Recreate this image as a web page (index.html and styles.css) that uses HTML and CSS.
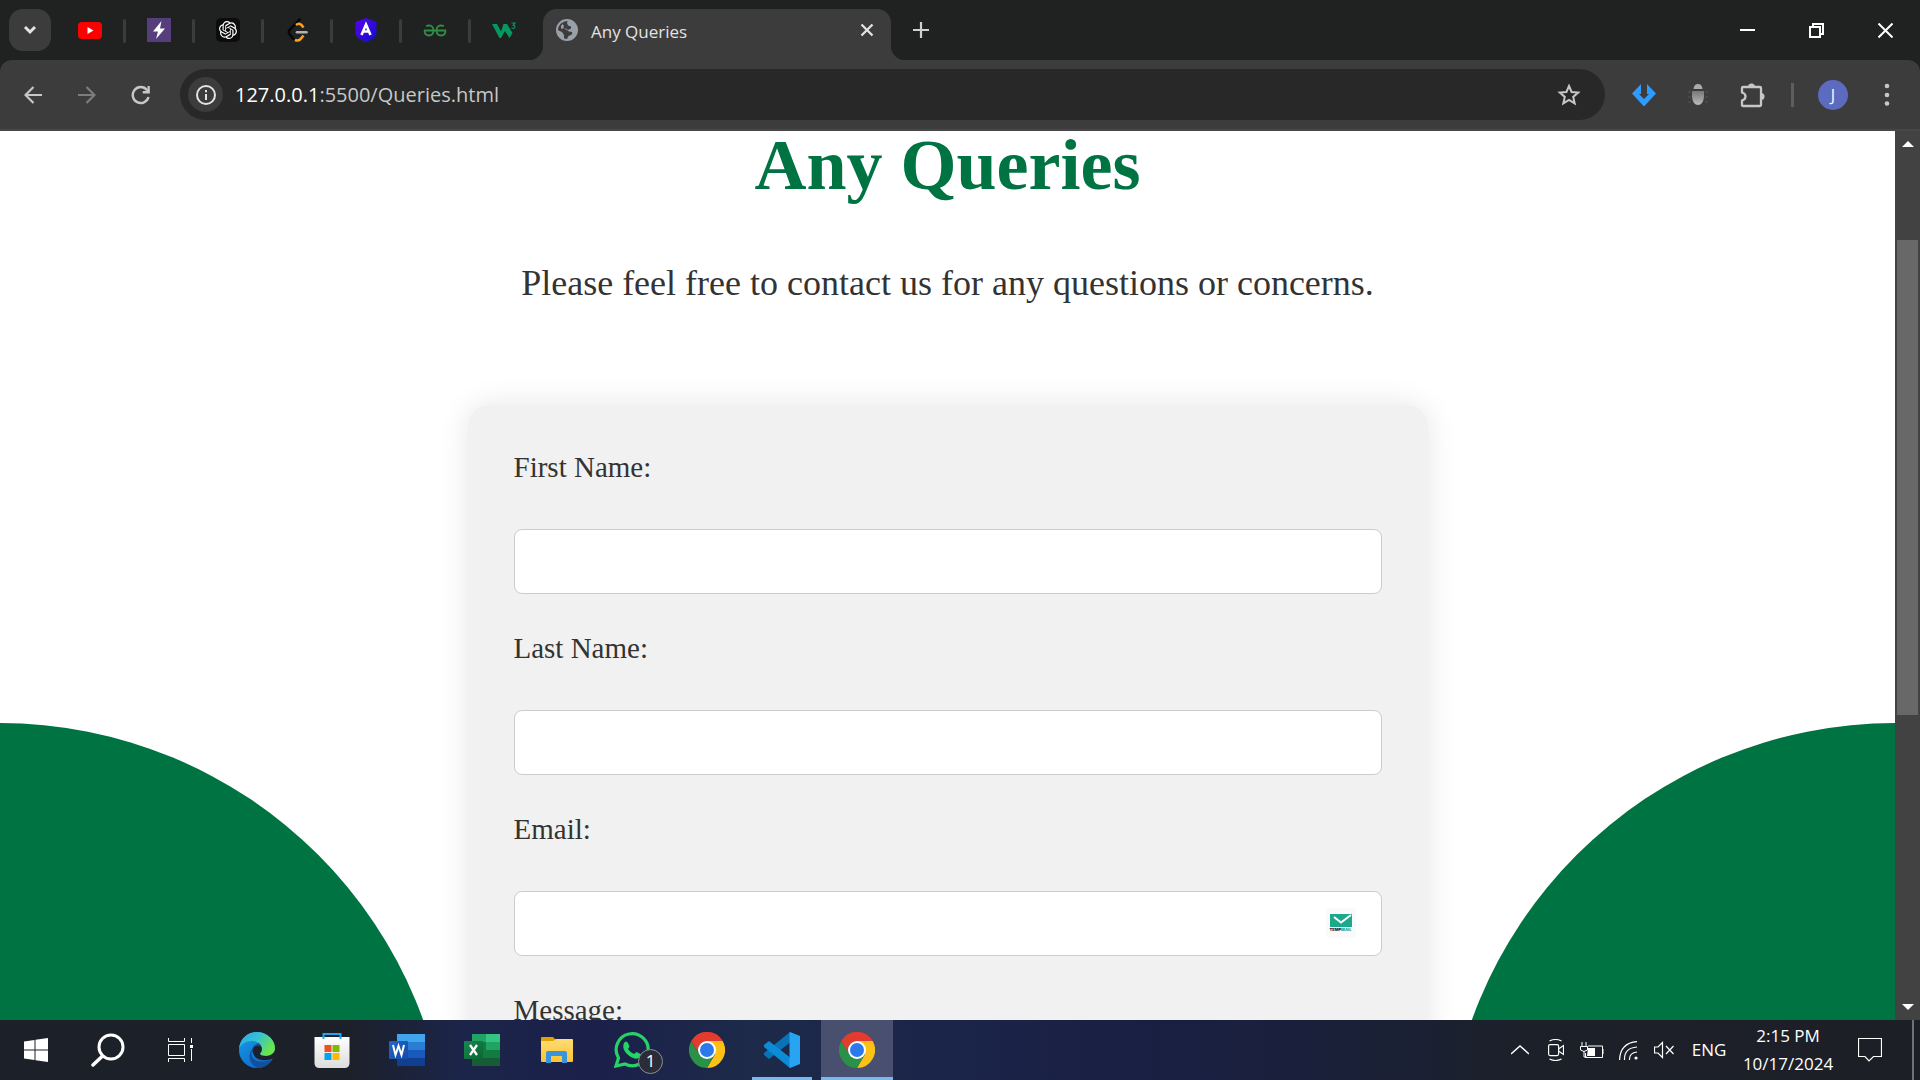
FILE: index.html
```html
<!DOCTYPE html>
<html lang="en">
<head>
<meta charset="utf-8">
<title>Any Queries</title>
<link rel="stylesheet" href="styles.css">
</head>
<body>
<svg class="defs" aria-hidden="true">
  <defs>
    <linearGradient id="word-front" x1="0" y1="0" x2="1" y2="1"><stop offset="0" stop-color="#2368c4"/><stop offset="1" stop-color="#1549a8"/></linearGradient>
    <linearGradient id="excel-front" x1="0" y1="0" x2="1" y2="1"><stop offset="0" stop-color="#18884f"/><stop offset="1" stop-color="#0b6631"/></linearGradient>
    <linearGradient id="edge-top" x1="0" y1="0" x2="1" y2="0.5"><stop offset="0" stop-color="#2aa7e6"/><stop offset="0.5" stop-color="#35c1d6"/><stop offset="1" stop-color="#6be64a"/></linearGradient>
    <linearGradient id="edge-body" x1="0" y1="0" x2="0.6" y2="1"><stop offset="0" stop-color="#1b9de2"/><stop offset="1" stop-color="#0a6cd0"/></linearGradient>
    <linearGradient id="folder" x1="0" y1="0" x2="0" y2="1"><stop offset="0" stop-color="#ffdc78"/><stop offset="1" stop-color="#fbc42f"/></linearGradient>
    <linearGradient id="bag" x1="0" y1="0" x2="0" y2="1"><stop offset="0" stop-color="#ffffff"/><stop offset="1" stop-color="#dcdcdc"/></linearGradient>
    <linearGradient id="bug" x1="0" y1="0" x2="0" y2="1"><stop offset="0" stop-color="#777"/><stop offset="1" stop-color="#bbb"/></linearGradient>
    <linearGradient id="shield" x1="0" y1="0" x2="1" y2="1"><stop offset="0" stop-color="#5a00f0"/><stop offset="1" stop-color="#0d12c8"/></linearGradient>
    <symbol id="chrome" viewBox="0 0 36 36">
      <path d="M18 18 2.4 9A18 18 0 0 1 33.600 9z" fill="#e33b2e"/>
      <path d="M18 9h15.600A18 18 0 0 1 18 36l7.800-13.500z" fill="#fbc116"/>
      <path d="M10.200 22.500 2.400 9A18 18 0 0 0 18 36l7.800-13.500z" fill="#2a9246"/>
      <path d="M2.400 9A18 18 0 0 1 33.600 9H18a9 9 0 0 0-7.800 13.500z" fill="#e33b2e"/>
      <circle cx="18" cy="18" r="9" fill="#fff"/><circle cx="18" cy="18" r="7" fill="#2b79ea"/>
    </symbol>
  </defs>
</svg>

<header class="browser">
  <div class="tab-strip">
    <button class="tab-search" aria-label="Search tabs"><svg width="14" height="10" viewBox="0 0 14 10"><path d="M2 2l5 5 5-5" fill="none" stroke="#e3e3e3" stroke-width="3"/></svg></button>
    <nav class="pinned-tabs" aria-label="Pinned tabs">
      <button class="pinned" aria-label="YouTube"><svg width="24" height="24" viewBox="0 0 24 24"><rect y="4" width="24" height="17" rx="4" fill="#f00"/><path d="M9.500 9v7l6-3.500z" fill="#fff"/></svg></button>
      <button class="pinned" aria-label="Bolt"><svg width="24" height="24" viewBox="0 0 24 24"><path fill="#563d7c" d="M0 0h24v24H0z"/><path d="M14.500 3 6 13.500h5L9 21l9-10.500h-5z" fill="#fff"/></svg></button>
      <button class="pinned" aria-label="Chat"><svg width="24" height="24" viewBox="0 0 24 24"><rect width="24" height="24" rx="5" fill="#0c0c0c"/><path transform="translate(3 3) scale(.75)" fill="#fff" d="M22.2819 9.8211a5.9847 5.9847 0 0 0-.5157-4.9108 6.0462 6.0462 0 0 0-6.5098-2.9A6.0651 6.0651 0 0 0 4.9807 4.1818a5.9847 5.9847 0 0 0-3.9977 2.9 6.0462 6.0462 0 0 0 .7427 7.0966 5.98 5.98 0 0 0 .511 4.9107 6.051 6.051 0 0 0 6.5146 2.9001A5.9847 5.9847 0 0 0 13.2599 24a6.0557 6.0557 0 0 0 5.7718-4.2058 5.9894 5.9894 0 0 0 3.9977-2.9001 6.0557 6.0557 0 0 0-.7475-7.0729zm-9.022 12.6081a4.4755 4.4755 0 0 1-2.8764-1.0408l.1419-.0804 4.7783-2.7582a.7948.7948 0 0 0 .3927-.6813v-6.7369l2.02 1.1686a.071.071 0 0 1 .038.052v5.5826a4.504 4.504 0 0 1-4.4945 4.4944zm-9.6607-4.1254a4.4708 4.4708 0 0 1-.5346-3.0137l.142.0852 4.783 2.7582a.7712.7712 0 0 0 .7806 0l5.8428-3.3685v2.3324a.0804.0804 0 0 1-.0332.0615L9.74 19.9502a4.4992 4.4992 0 0 1-6.1408-1.6464zM2.3408 7.8956a4.485 4.485 0 0 1 2.3655-1.9728V11.6a.7664.7664 0 0 0 .3879.6765l5.8144 3.3543-2.0201 1.1685a.0757.0757 0 0 1-.071 0l-4.8303-2.7865A4.504 4.504 0 0 1 2.3408 7.872zm16.5963 3.8558L13.1038 8.364 15.1192 7.2a.0757.0757 0 0 1 .071 0l4.8303 2.7913a4.4944 4.4944 0 0 1-.6765 8.1042v-5.6772a.79.79 0 0 0-.407-.667zm2.0107-3.0231l-.142-.0852-4.7735-2.7818a.7759.7759 0 0 0-.7854 0L9.409 9.2297V6.8974a.0662.0662 0 0 1 .0284-.0615l4.8303-2.7866a4.4992 4.4992 0 0 1 6.6802 4.66zM8.3065 12.863l-2.02-1.1638a.0804.0804 0 0 1-.038-.0567V6.0742a4.4992 4.4992 0 0 1 7.3757-3.4537l-.142.0805L8.704 5.459a.7948.7948 0 0 0-.3927.6813zm1.0976-2.3654l2.602-1.4998 2.6069 1.4998v2.9994l-2.5974 1.4997-2.6067-1.4997Z"/></svg></button>
      <button class="pinned" aria-label="Code practice"><svg width="24" height="24" viewBox="0 0 24 24"><g fill="none" stroke-width="2.600"><path d="m15.500.5-11 11.500q-1.500 2.500.5 5l4 4.500" stroke="#070707"/><path d="M11 7q3-2.500 5.500 0l2 2.500M10 22q4 1.500 6-1.500l2.500-3" stroke="#ffa116"/><path d="M12 14.200h9.500" stroke="#b3b3b3" stroke-linecap="round"/></g></svg></button>
      <button class="pinned" aria-label="Academy"><svg width="24" height="24" viewBox="0 0 24 24"><path d="M12 0 22.500 4v12q-2 5.500-10.500 8Q3.500 21.500 1.500 16V4z" fill="url(#shield)"/><path d="M7.500 17 12 6.500 16.500 17M9 13.500h6" fill="none" stroke="#fff" stroke-width="2.600"/></svg></button>
      <button class="pinned" aria-label="Geeks"><svg width="24" height="24" viewBox="0 0 24 24"><g fill="none" stroke="#2f8d46" stroke-width="1.800"><path d="M1 12.500h22M3 8q7-2 7.500 4 0 5.500-4.500 5.500T1.500 12.500M21 8q-7-2-7.500 4 0 5.500 4.500 5.500t4.500-5"/></g></svg></button>
      <button class="pinned" aria-label="Web school"><svg width="24" height="24" viewBox="0 0 24 24"><path d="M0 6h5l4 7.500L11.500 6h3.500l5.500 9-3 5L13 13l-4 7H7.500z" fill="#059862"/><path d="M19.500 5H23l-1.800 2.200q2 .3 1.500 2.300-1 1.500-3.200.5" fill="none" stroke="#059862" stroke-width="1.200"/></svg></button>
    </nav>
    <div class="active-tab">
      <svg width="22" height="22" viewBox="0 0 22 22"><circle cx="11" cy="11" r="10" fill="#3c3c3c" stroke="#9aa0a9" stroke-width="2"/><path d="M9 1.500Q7 3 6.500 5l-1.500 2v2.500L9 10q2.500 1 4 2.500l3 .5q1 2-1 3l-2.500 1-2 4Q20 21 21 11 20 2 12 1l-1 3 1 2.500 3 1v2l-3 1.500-2-1.500-3 .5 1-3L6.500 5z" fill="#9aa0a9"/><path d="M1.500 11l4.500 2 2 3v4Q2 18 1.500 11z" fill="#9aa0a9"/></svg>
      <span class="tab-title">Any Queries</span>
      <button class="tab-close" aria-label="Close tab"><svg width="14" height="14" viewBox="0 0 14 14"><path d="m1.500 1.500 11 11m0-11-11 11" stroke="#e3e3e3" stroke-width="2.300"/></svg></button>
    </div>
    <button class="new-tab" aria-label="New tab"><svg width="16" height="16" viewBox="0 0 16 16"><path d="M8 0v16M0 8h16" stroke="#d0d0d0" stroke-width="2.200"/></svg></button>
    <div class="window-controls">
      <button aria-label="Minimize"><svg width="15" height="15"><path d="M0 7h15" stroke="#fff" stroke-width="2"/></svg></button>
      <button aria-label="Restore"><svg width="15" height="15" viewBox="0 0 15 15"><path d="M1 4h10v10H1zM4 4V1h10v10h-3" fill="none" stroke="#fff" stroke-width="2"/></svg></button>
      <button aria-label="Close"><svg width="15" height="15" viewBox="0 0 15 15"><path d="m.5.5 14 14m0-14-14 14" stroke="#fff" stroke-width="2"/></svg></button>
    </div>
  </div>
  <div class="toolbar">
    <button class="nav-button" aria-label="Back"><svg width="18" height="18" viewBox="0 0 18 18"><path d="M18 9H2m7.500-8L1.500 9l8 8" fill="none" stroke="#c7c7c7" stroke-width="2.200"/></svg></button>
    <button class="nav-button" aria-label="Forward"><svg width="18" height="18" viewBox="0 0 18 18"><path d="M0 9h16M8.500 1l8 8-8 8" fill="none" stroke="#7d7d7d" stroke-width="2.200"/></svg></button>
    <button class="nav-button" aria-label="Reload"><svg width="20" height="20" viewBox="0 0 20 20"><path d="M17.500 12A8 8 0 1 1 16 5l2 2" fill="none" stroke="#c7c7c7" stroke-width="2.400"/><path d="M18.800 1v7.500h-7V6h4.700V1z" fill="#c7c7c7"/></svg></button>
    <div class="address-bar">
      <button class="site-info" aria-label="Site information"><svg width="20" height="20" viewBox="0 0 20 20"><circle cx="10" cy="10" r="9" fill="none" stroke="#e3e3e3" stroke-width="2"/><path d="M10 9v6M10 5v2.200" stroke="#e3e3e3" stroke-width="2"/></svg></button>
      <span class="url"><span class="host">127.0.0.1</span>:5500/Queries.html</span>
      <button class="bookmark" aria-label="Bookmark"><svg width="24" height="24" viewBox="0 0 24 24"><path d="m12 3 2.600 6 6.600.6-5 4.300 1.500 6.500L12 17l-5.700 3.400 1.500-6.500-5-4.300 6.600-.6z" fill="none" stroke="#c7c7c7" stroke-width="2"/></svg></button>
    </div>
    <div class="extensions">
      <button aria-label="Downloader"><svg width="24" height="24" viewBox="0 0 24 24"><path d="M9 1v10H7l5 5 5-5h-2V1l9 9.500L12.500 23h-1L0 10.500z" fill="#2e9bff"/></svg></button>
      <button aria-label="Debugger"><svg width="24" height="24" viewBox="0 0 24 24"><path d="M7.500 6q.5-5 4.500-5t4.500 5z" fill="#aaa"/><path d="M6 8h12v6q-1 8-6 8t-6-8z" fill="url(#bug)"/><path d="M2 9h3M2 14h3M2 19h3m14-10h3m-3 5h3m-3 5h3" stroke="#555"/></svg></button>
      <button aria-label="Extensions"><svg width="26" height="26" viewBox="0 0 26 26"><path d="M4 5h17q1 0 1 1v17q0 1-1 1H4q-1 0-1-1v-4.500q3.500-1 3.500-4T3 10.500V6q0-1 1-1z" fill="none" stroke="#c7c7c7" stroke-width="2.300"/><path d="M9 5a3.500 3.500 0 0 1 7 0zM22 11a3.500 3.500 0 0 1 0 7z" fill="#c7c7c7"/></svg></button>
      <span class="divider"></span>
      <button aria-label="Profile"><span class="avatar">J</span></button>
      <button aria-label="Menu"><svg width="6" height="24" viewBox="0 0 6 24"><g fill="#c7c7c7"><circle cx="3" cy="3" r="2.300"/><circle cx="3" cy="12" r="2.300"/><circle cx="3" cy="20.500" r="2.300"/></g></svg></button>
    </div>
  </div>
</header>

<div class="viewport">
  <main class="page">
    <h1>Any Queries</h1>
    <p class="intro">Please feel free to contact us for any questions or concerns.</p>
    <form class="card">
      <div class="field"><label for="first-name">First Name:</label><input id="first-name" type="text"></div>
      <div class="field"><label for="last-name">Last Name:</label><input id="last-name" type="text"></div>
      <div class="field"><label for="email">Email:</label>
        <div class="email-box"><input id="email" type="email">
          <span class="mail-badge"><svg width="22" height="13" viewBox="0 0 22 13"><path fill="#1ba88b" d="M0 0h22v13H0z"/><path d="m4 3 7 5.500L21 1" fill="none" stroke="#fff" stroke-width="2"/></svg><span class="mail-name">TEMP<span>MAIL</span></span></span>
        </div>
      </div>
      <div class="field"><label for="message">Message:</label><textarea id="message"></textarea></div>
    </form>
  </main>
  <div class="scrollbar" aria-hidden="true">
    <svg width="12" height="6" viewBox="0 0 12 6"><path d="M0 6 6 0l6 6z" fill="#fff"/></svg>
    <div class="track"><div class="thumb"></div></div>
    <svg width="12" height="6" viewBox="0 0 12 6"><path d="M0 0h12L6 6z" fill="#fff"/></svg>
  </div>
</div>

<footer class="taskbar">
  <div class="system-buttons">
    <button aria-label="Start"><svg width="24" height="24" viewBox="0 0 24 24"><path d="M0 3.500 10.500 2v9.500H0zM11.500 1.800 24 0v11.500H11.500zM0 12.500h10.500V22L0 20.500zM11.500 12.500H24V24l-12.500-1.800z" fill="#fff"/></svg></button>
    <button aria-label="Search"><svg width="34" height="34" viewBox="0 0 34 34"><circle cx="20" cy="14" r="12" fill="none" stroke="#fff" stroke-width="3"/><path d="M11.500 23 2 32" stroke="#fff" stroke-width="3.500" stroke-linecap="round"/></svg></button>
    <button aria-label="Task view"><svg width="25" height="24" viewBox="0 0 25 24"><path d="M.5 0v3.500h16V0M.5 6.500h16v11H.5zM.5 24v-3.500h16V24M23.500 0v5m0 6v12" fill="none" stroke="#fff"/><path d="M22 7h3v3h-3z" fill="#fff"/></svg></button>
  </div>
  <div class="apps">
    <button aria-label="Edge"><svg width="36" height="36" viewBox="0 0 36 36"><circle cx="18" cy="18" r="18" fill="url(#edge-body)"/><path d="M13 18q1-6 8-7l15 7q0 6-6 6-8 0-7-5-5-7-10 2-1 9 9 13-10-2-9-16z" fill="#124f9e"/><path d="M0 17C1 6 9 0 18 0s18 7 18 16c0 5-4 8-9 8-6 0-7-2-5-4C25 14 20 9 13 9 7 9 2 12 0 17z" fill="url(#edge-top)"/><path d="M22 14.500q-5-2-7.500 1.500-2 5 1.500 9 6 5 15 2.500l5-1.500v-7q-3 5-9 5-6 0-6-2.500 3-3 1-7z" fill="#1c212c"/><path d="M14 16q-4.500 9 4 13 7 2 14.500-1.500Q28 36 18 36q-8-5-7.500-12 .5-5 3.500-8z" fill="#124f9e"/></svg></button>
    <button aria-label="Store"><svg width="36" height="36" viewBox="0 0 36 36"><path d="M9.500 8V2h17v6" fill="none" stroke="#24a4ee" stroke-width="2"/><path d="M.500 5h35v26q0 5-5 5h-25q-5 0-5-5z" fill="url(#bag)"/><path d="M9.500 7V5M26.500 7V5" stroke="#24a4ee" stroke-width="2"/><path fill="#f25022" d="M10.500 13h7v7h-7z"/><path fill="#7fba00" d="M18.500 13h7v7h-7z"/><path fill="#00a4ef" d="M10.500 21h7v7h-7z"/><path fill="#ffb900" d="M18.500 21h7v7h-7z"/></svg></button>
    <button aria-label="Word"><svg width="36" height="36" viewBox="0 0 36 36"><path fill="#41a5ee" d="M8 2h28v8H8z"/><path fill="#2b7cd3" d="M8 10h28v8H8z"/><path fill="#185abd" d="M8 18h28v8H8z"/><path fill="#103f91" d="M8 26h28v8H8z"/><rect y="9" width="19" height="18" rx="1" fill="url(#word-front)"/><path d="m4 13 2.500 10L9.500 14l3 9L15 13" fill="none" stroke="#fff" stroke-width="2"/></svg></button>
    <button aria-label="Excel"><svg width="36" height="36" viewBox="0 0 36 36"><path fill="#21a366" d="M8 2h28v8H8z"/><path fill="#33c481" d="M22 2h14v8H22z"/><path fill="#107c41" d="M8 10h28v16H8z"/><path fill="#21a366" d="M22 10h14v8H22z"/><path fill="#185c37" d="M8 26h28v8H8z"/><rect y="9" width="19" height="18" rx="1" fill="url(#excel-front)"/><path d="m6 13 7 10m0-10L6 23" stroke="#fff" stroke-width="2.300"/></svg></button>
    <button aria-label="File Explorer"><svg width="32" height="36" viewBox="0 0 32 36"><path d="M0 6q0-1 1-1h11l3 3v6H0z" fill="#dfa000"/><path d="M0 9h12l3-2h16q1 0 1 1v21q0 1-1 1H1q-1 0-1-1z" fill="url(#folder)"/><path d="M5 31V21q0-2 2-2h17q2 0 2 2v10h-5v-7H10v7z" fill="#3a93dd"/></svg></button>
    <button class="whatsapp" aria-label="WhatsApp"><svg width="36" height="36" viewBox="0 0 36 36"><path d="m2 34 2.500-8A16 16 0 1 1 11 32z" fill="none" stroke="#25d366" stroke-width="3.200"/><path d="M10 11q2-3 4 0l1.500 3.500-1.500 2.500q2.500 4 6 5l2.500-2 4 2q1 3-3 4.500-5 1-11-5-5-6-2.500-10.500z" fill="#25d366"/></svg><span class="count">1</span></button>
    <button aria-label="Chrome"><svg width="36" height="36"><use href="#chrome"/></svg></button>
    <button class="running" aria-label="Code editor"><svg width="36" height="36" viewBox="0 0 36 36"><path d="m26 0 2 9L5 27l-5-4v-2z" fill="#0873b8"/><path d="m0 13 5-4 23 18-2 9L0 15z" fill="#0c8bd6"/><path d="M26 0 36 4v28l-10 4q-1 0-.500-2V2q0-2 .5-2z" fill="#27a5f3"/></svg></button>
    <button class="running current" aria-label="Chrome window"><svg width="36" height="36"><use href="#chrome"/></svg></button>
  </div>
  <div class="tray">
    <button aria-label="Hidden icons"><svg width="18" height="10" viewBox="0 0 18 10"><path d="m0 9 9-8 9 8" fill="none" stroke="#fff" stroke-width="1.500"/></svg></button>
    <button aria-label="Meet now"><svg width="16" height="22" viewBox="0 0 16 22"><g fill="none" stroke="#fff" stroke-width="1.200"><rect x=".600" y="5.600" width="10" height="11" rx="1.500"/><path d="m10.500 10 5-3.500v9l-5-3.500M1.500 2q6-3 12 0M1.500 20q6 3 12 0"/></g></svg></button>
    <button aria-label="Battery"><svg width="24" height="17" viewBox="0 0 24 17"><path d="M8 4h14.500v11.500h-17V11M24 7v5M2 0v4m4-4v4M.5 4.500h7V8q-3.500 3-7 0zM4 9v6h3" fill="none" stroke="#fff"/><path d="M8 6h7v8H7z" fill="#fff"/></svg></button>
    <button aria-label="Wi-Fi"><svg width="19" height="19" viewBox="0 0 19 19"><g fill="none" stroke="#fff" stroke-width="1.200"><path d="M.6 19Q1 2 18 .6M5.500 19Q5 7 18 6M10.500 19Q10 12 18 11"/></g><circle cx="17" cy="17" r="1.600" fill="#fff"/></svg></button>
    <button aria-label="Volume"><svg width="20" height="18" viewBox="0 0 20 18"><path d="M.5 6v6H4l4.500 4.500v-15L4 6zM12 5l7.500 8m0-8L12 13" fill="none" stroke="#fff" stroke-width="1.200"/></svg></button>
    <button class="language">ENG</button>
    <button class="clock"><span>2:15 PM</span><span>10/17/2024</span></button>
    <button class="notifications" aria-label="Notifications"><svg width="24" height="24" viewBox="0 0 24 24"><path d="M.5.5h23v18h-8L11 23l-4-4.500H.5z" fill="none" stroke="#fff" stroke-width="1.200"/></svg></button>
    <span class="show-desktop"></span>
  </div>
</footer>
</body>
</html>
```
FILE: styles.css
```css
* { box-sizing: border-box; }

body {
  margin: 0;
  height: 100vh;
  display: flex;
  flex-direction: column;
  overflow: hidden;
  font-family: "Open Sans", "Noto Sans", sans-serif;
}

button {
  display: flex;
  align-items: center;
  justify-content: center;
  padding: 0;
  border: 0;
  background: none;
  color: inherit;
  font: inherit;
}

.defs { position: absolute; width: 0; height: 0; }

/* Browser window */
.browser { background: #202221; }

.tab-strip {
  display: flex;
  align-items: stretch;
  height: 60px;
  padding: 9px 0 0 9px;
}

.tab-search {
  width: 42px;
  height: 42px;
  border-radius: 14px;
  background: #3c3c3c;
}

.pinned-tabs { display: flex; margin: 0 5px 9px 4px; }

.pinned { width: 69px; position: relative; }

.pinned + .pinned::before {
  content: "";
  position: absolute;
  left: -1px;
  top: 10px;
  width: 3px;
  height: 24px;
  border-radius: 2px;
  background: #3c3c3c;
}

.active-tab {
  position: relative;
  display: flex;
  align-items: center;
  width: 348px;
  padding: 0 17px 9px 13px;
  border-radius: 14px 14px 0 0;
  background: #3c3c3c;
  color: #e3e3e3;
}

.active-tab::before,
.active-tab::after {
  content: "";
  position: absolute;
  bottom: 0;
  width: 15px;
  height: 15px;
}

.active-tab::before {
  right: 100%;
  background: radial-gradient(circle at 0 0, #202221 15px, #3c3c3c 16px);
}

.active-tab::after {
  left: 100%;
  background: radial-gradient(circle at 100% 0, #202221 15px, #3c3c3c 16px);
}

.tab-title { flex: 1; margin-left: 13px; padding-top: 4px; font-size: 17px; line-height: 24px; }

.new-tab { width: 60px; margin-bottom: 9px; }

.window-controls { display: flex; margin: 0 0 9px auto; }
.window-controls button { width: 69px; }

.toolbar {
  display: flex;
  align-items: center;
  height: 71px;
  padding: 0 6px;
  border-bottom: 2px solid #474747;
  border-radius: 12px 12px 0 0;
  background: #3c3c3c;
}

.nav-button { width: 54px; height: 51px; }

.address-bar {
  flex: 1;
  display: flex;
  align-items: center;
  height: 51px;
  margin: 0 12px;
  padding: 0 24px 0 8px;
  border-radius: 26px;
  background: #282828;
}

.site-info { width: 35px; height: 35px; border-radius: 50%; background: #3c3c3c; }

.url { flex: 1; margin-left: 12px; color: #c7c7c7; font-size: 20px; line-height: 28px; }
.host { color: #fff; }

.extensions { display: flex; align-items: center; }
.extensions button { width: 54px; height: 51px; }

.divider { width: 3px; height: 24px; margin: 0 12px; background: #5e5e5e; }

.avatar {
  width: 30px;
  border-radius: 50%;
  background: #5c6bc0;
  color: #fff;
  font-size: 16px;
  line-height: 30px;
}

/* Web page */
.viewport { flex: 1; display: flex; min-height: 0; background: #fff; }

.page {
  position: relative;
  flex: 1;
  overflow: hidden;
  color: #333;
  font-family: "Liberation Serif", "Times New Roman", serif;
}

.page::before,
.page::after {
  content: "";
  position: absolute;
  bottom: -603px;
  width: 900px;
  height: 900px;
  border-radius: 50%;
  background: #007343;
}

.page::before { left: -450px; }
.page::after { right: -450px; }

h1 {
  margin: 0;
  color: #007343;
  font-size: 72px;
  line-height: 68px;
  text-align: center;
}

.intro { margin: 63px 0 101px; font-size: 36px; line-height: 42px; text-align: center; }

.card {
  position: relative;
  z-index: 1;
  max-width: 960px;
  margin: 0 auto;
  padding: 46px;
  border-radius: 22px;
  background: #f1f1f1;
  box-shadow: 0 0 30px rgba(0, 0, 0, 0.1);
}

.field { display: flex; flex-direction: column; gap: 45px; margin-bottom: 38px; }

label { font-size: 29px; line-height: 33px; }

input,
textarea {
  display: block;
  width: 100%;
  height: 65px;
  padding: 0 20px;
  border: 1px solid #ccc;
  border-radius: 8px;
  background: #fff;
  color: #333;
  font: inherit;
  font-size: 24px;
}

textarea { height: 200px; }

.email-box { position: relative; }

.mail-badge {
  position: absolute;
  top: 17px;
  right: 26px;
  display: flex;
  flex-direction: column;
  align-items: center;
  width: 30px;
  height: 30px;
  padding-top: 6px;
  border-radius: 4px;
  background: #fafafa;
}

.mail-name { color: #1f2b45; font: 900 4px/6px "Inter", sans-serif; }
.mail-name span { color: #1ba88b; }

.scrollbar {
  display: flex;
  flex-direction: column;
  align-items: center;
  width: 25px;
  padding: 10px 0;
  background: #424242;
}

.track { flex: 1; width: 21px; padding: 93px 0 289px; }
.thumb { height: 100%; background: #686868; }

/* Taskbar */
.taskbar {
  display: flex;
  height: 60px;
  background: linear-gradient(90deg, #1c2029 0, #1c2029 18%, #1b2549 24%, #1b204a 31%, #1d2a49 39%, #1b2449 50%, #191f42 60%, #1a2038 70%, #1c2029 80%, #1c1f26 100%);
  color: #fff;
}

.system-buttons { display: flex; margin-right: 5px; }
.system-buttons button { width: 72px; }

.apps { display: flex; gap: 3px; }
.apps button { position: relative; width: 72px; }

.running::after {
  content: "";
  position: absolute;
  bottom: 0;
  left: 6px;
  right: 6px;
  height: 3px;
  background: #76b9ed;
}

.current { background: #494f6f; }
.current::after { left: 0; right: 0; }

.count {
  position: absolute;
  top: 29px;
  left: 42px;
  width: 25px;
  height: 25px;
  border: 1px solid #8b8e96;
  border-radius: 50%;
  background: #2a2d38;
  font-size: 17px;
  line-height: 22px;
}

.tray { display: flex; margin-left: auto; font-size: 17px; line-height: 28px; }
.tray button { width: 36px; }
.tray .language { width: 54px; }
.tray .clock { flex-direction: column; width: 104px; }
.tray .notifications { width: 60px; }

.show-desktop { width: 2px; margin: 0 6px 0 12px; background: #6f7176; }
```
